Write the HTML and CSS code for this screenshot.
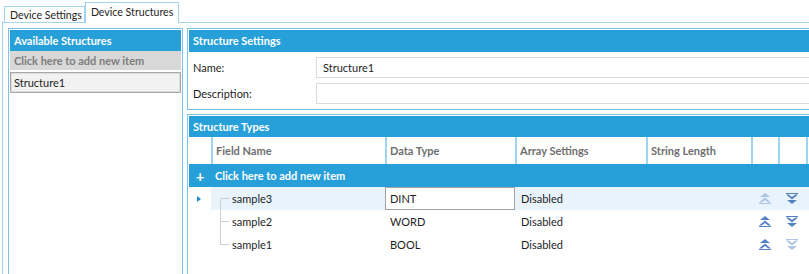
FILE: index.html
```html
<!DOCTYPE html>
<html>
<head>
<meta charset="utf-8">
<link rel="stylesheet" href="styles.css">
</head>
<body>
<div class="tabs">
  <div class="tab">Device Settings</div>
  <div class="tab active">Device Structures</div>
</div>
<div class="content">
  <section class="panel left">
    <div class="phead">Available Structures</div>
    <div class="add-grey">Click here to add new item</div>
    <div class="item">Structure1</div>
  </section>
  <div class="right">
    <section class="panel settings">
      <div class="phead">Structure Settings</div>
      <div class="form">
        <div class="frow"><span class="flabel">Name:</span><span class="finput">Structure1</span></div>
        <div class="frow"><span class="flabel">Description:</span><span class="finput"></span></div>
      </div>
    </section>
    <section class="panel types">
      <div class="phead">Structure Types</div>
      <div class="grid">
        <div class="hc first"></div>
        <div class="hc">Field Name</div>
        <div class="hc">Data Type</div>
        <div class="hc">Array Settings</div>
        <div class="hc">String Length</div>
        <div class="hc"></div>
        <div class="hc"></div>
        <div class="hc"></div>

        <div class="addrow"><span class="plus">+</span><span>Click here to add new item</span></div>

        <div class="c ind"><svg width="4" height="6" viewBox="0 0 4 6"><path d="M0 0L4 3L0 6Z" fill="#1f8ad2"/></svg></div>
        <div class="c name sel"><div class="tree first"><i class="up"></i><i class="down"></i></div><span>sample3</span></div>
        <div class="c dt sel focus">DINT</div>
        <div class="c as sel">Disabled</div>
        <div class="c sel"></div>
        <div class="c ic sel"><svg class="up-ic faded" width="12" height="11" viewBox="0 0 12 11"><path d="M6 0L11 4H1Z"/><path d="M6 4.5L12 9.5H9.2L6 7L2.8 9.5H0Z"/><rect x="0" y="10" width="12" height="1"/></svg></div>
        <div class="c ic sel"><svg class="dn-ic" width="12" height="11" viewBox="0 0 12 11"><rect x="0" y="0" width="12" height="1"/><path d="M0 1.5H2.8L6 4L9.2 1.5H12L6 6.5Z"/><path d="M1 7H11L6 11Z"/></svg></div>
        <div class="c sel"></div>

        <div class="c ind"></div>
        <div class="c name"><div class="tree"><i class="up"></i><i class="down"></i></div><span>sample2</span></div>
        <div class="c dt">WORD</div>
        <div class="c as">Disabled</div>
        <div class="c"></div>
        <div class="c ic"><svg class="up-ic" width="12" height="11" viewBox="0 0 12 11"><path d="M6 0L11 4H1Z"/><path d="M6 4.5L12 9.5H9.2L6 7L2.8 9.5H0Z"/><rect x="0" y="10" width="12" height="1"/></svg></div>
        <div class="c ic"><svg class="dn-ic" width="12" height="11" viewBox="0 0 12 11"><rect x="0" y="0" width="12" height="1"/><path d="M0 1.5H2.8L6 4L9.2 1.5H12L6 6.5Z"/><path d="M1 7H11L6 11Z"/></svg></div>
        <div class="c"></div>

        <div class="c ind"></div>
        <div class="c name"><div class="tree last"><i class="up"></i><i class="down"></i></div><span>sample1</span></div>
        <div class="c dt">BOOL</div>
        <div class="c as">Disabled</div>
        <div class="c"></div>
        <div class="c ic"><svg class="up-ic" width="12" height="11" viewBox="0 0 12 11"><path d="M6 0L11 4H1Z"/><path d="M6 4.5L12 9.5H9.2L6 7L2.8 9.5H0Z"/><rect x="0" y="10" width="12" height="1"/></svg></div>
        <div class="c ic"><svg class="dn-ic faded" width="12" height="11" viewBox="0 0 12 11"><rect x="0" y="0" width="12" height="1"/><path d="M0 1.5H2.8L6 4L9.2 1.5H12L6 6.5Z"/><path d="M1 7H11L6 11Z"/></svg></div>
        <div class="c"></div>
      </div>
    </section>
  </div>
</div>
</body>
</html>
```

FILE: styles.css
```css
html, body {
  margin: 0;
  padding: 0;
}
body {
  width: 809px;
  height: 274px;
  overflow: hidden;
  background: #fff;
  font-family: "Lato", "Noto Sans", sans-serif;
  font-size: 11px;
  color: #1e1e1e;
}
.tabs {
  display: flex;
  align-items: flex-end;
  height: 22px;
  padding-left: 4px;
  font-size: 10.6px;
}
.tab {
  height: 15px;
  line-height: 16px;
  padding: 0 2px 0 5px;
  border: 1px solid #9fd3f1;
  border-bottom: none;
  background: #fff;
}
.tab.active {
  height: 20px;
  line-height: 18px;
  margin-bottom: -1px;
  padding: 0 5px 0 5px;
  position: relative;
  z-index: 1;
}
.content {
  box-sizing: border-box;
  margin-left: 2px;
  border-top: 1px solid #9fd3f1;
  border-left: 1px solid #9fd3f1;
  padding: 5px 0 0 5px;
  height: 252px;
  display: flex;
  gap: 4px;
}
.panel {
  border: 1px solid #7cc3ec;
  padding: 1px;
  background: #fff;
}
.phead {
  height: 21px;
  line-height: 21px;
  background: #27a0da;
  color: #fff;
  font-weight: 700;
  padding-left: 4px;
}
.left {
  width: 171px;
  flex: none;
  border-bottom: none;
}
.add-grey {
  height: 19px;
  line-height: 19px;
  background: #d8d8d8;
  color: #7d7d7d;
  font-weight: 700;
  padding-left: 4px;
}
.item {
  margin-top: 2px;
  height: 19px;
  line-height: 19px;
  border: 1px solid #a8a8a8;
  box-shadow: inset 0 0 0 1px #dcdcdc;
  background: #f2f2f2;
  padding-left: 3px;
}
.right {
  width: 640px;
  flex: none;
  display: flex;
  flex-direction: column;
  gap: 4px;
}
.settings .phead {
  height: 22px;
  line-height: 22px;
}
.form {
  padding: 5px 0 4px 4px;
  display: flex;
  flex-direction: column;
  gap: 5px;
}
.frow {
  display: flex;
  align-items: center;
  height: 21px;
}
.flabel {
  width: 123px;
  flex: none;
}
.finput {
  flex: 1;
  height: 19px;
  line-height: 19px;
  border: 1px solid #dadada;
  padding-left: 6px;
}
.types {
  flex: 1;
  border-bottom: none;
}
.grid {
  display: grid;
  grid-template-columns: 22px 174px 130px 131px 105px 27px 28px 1fr;
  grid-auto-rows: 23px;
  grid-template-rows: 27px 23px;
}
.hc {
  border-left: 2px solid #9ed5f2;
  color: #6e6e6e;
  font-weight: 700;
  padding-left: 3px;
  line-height: 27px;
  white-space: nowrap;
}
.hc.first {
  border-left: none;
}
.addrow {
  grid-column: 1 / -1;
  background: #27a0da;
  color: #fff;
  font-weight: 700;
  display: flex;
  align-items: center;
}
.plus {
  width: 22px;
  text-align: center;
  font-size: 15px;
  font-weight: 700;
  margin-right: 4px;
}
.c {
  display: flex;
  align-items: center;
  white-space: nowrap;
}
.c.sel {
  background: #e8f3fb;
}
.ind {
  justify-content: center;
  padding-right: 3px;
}
.name {
  align-items: stretch;
}
.name span {
  display: flex;
  align-items: center;
  margin-left: 3px;
}
.tree {
  width: 9px;
  margin-left: 9px;
  display: flex;
  flex-direction: column;
}
.tree i {
  flex: 1;
  border-left: 1px solid #cfcfcf;
}
.tree i.up {
  border-bottom: 1px solid #cfcfcf;
}
.tree.first i.up {
  border-left-color: transparent;
}
.tree.last i.down {
  border-left-color: transparent;
}
.dt {
  padding-left: 5px;
}
.dt.focus {
  border: 1px solid #a4a4a4;
  padding-left: 4px;
  background: #fff;
}
.as {
  padding-left: 6px;
}
.ic {
  justify-content: center;
}
.up-ic, .dn-ic {
  fill: #5583c1;
}
.up-ic.faded, .dn-ic.faded {
  fill: #abc6e6;
}
```
